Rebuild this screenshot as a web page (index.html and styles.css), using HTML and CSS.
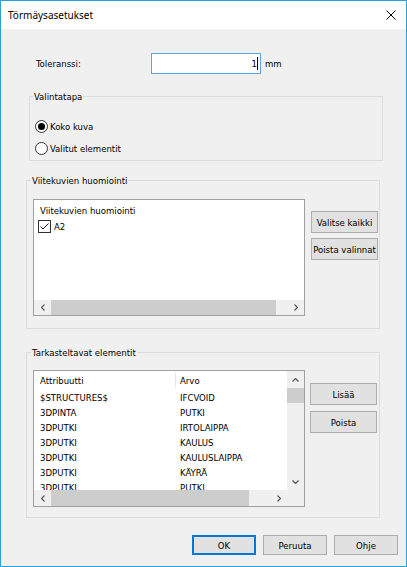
FILE: index.html
```html
<!DOCTYPE html>
<html lang="fi">
<head>
  <meta charset="UTF-8" />
  <title>Törmäysasetukset</title>
  <link rel="stylesheet" href="styles.css">
</head>
<body>
  <div class="window">
    <div class="titlebar">
      <span class="title">Törmäysasetukset</span>
      <svg class="close" width="10" height="10" viewBox="0 0 10 10">
        <path d="M0.5 0.5 L9.5 9.5 M9.5 0.5 L0.5 9.5" stroke="#000" stroke-width="1" fill="none"/>
      </svg>
    </div>

    <div class="tol-row">
      <span class="tol-label">Toleranssi:</span>
      <div class="textbox"><span>1</span><i class="caret"></i></div>
      <span class="unit">mm</span>
    </div>

    <fieldset class="group group-select">
      <legend>Valintatapa</legend>
      <div class="radio-row"><span class="radio checked"></span>Koko kuva</div>
      <div class="radio-row"><span class="radio"></span>Valitut elementit</div>
    </fieldset>

    <fieldset class="group group-ref">
      <legend>Viitekuvien huomiointi</legend>
      <div class="group-inner">
        <div class="listbox">
          <div class="list-content">
            <div class="list-head">Viitekuvien huomiointi</div>
            <div class="check-row">
              <span class="checkbox">
                <svg width="11" height="11" viewBox="0 0 11 11"><polyline points="1.5,5.5 4,8 9.5,2.5" fill="none" stroke="#222" stroke-width="1"/></svg>
              </span>
              A2
            </div>
          </div>
          <div class="hscroll">
            <span class="arrow"><svg width="4" height="7" viewBox="0 0 4 7"><polyline points="3.5,0.5 0.5,3.5 3.5,6.5" fill="none" stroke="#555" stroke-width="1.2"/></svg></span>
            <span class="thumb thumb-ref"></span>
            <span class="track"></span>
            <span class="arrow"><svg width="4" height="7" viewBox="0 0 4 7"><polyline points="0.5,0.5 3.5,3.5 0.5,6.5" fill="none" stroke="#555" stroke-width="1.2"/></svg></span>
          </div>
        </div>
        <div class="side-buttons">
          <button class="btn side-btn">Valitse kaikki</button>
          <button class="btn side-btn">Poista valinnat</button>
        </div>
      </div>
    </fieldset>

    <fieldset class="group group-attr">
      <legend>Tarkasteltavat elementit</legend>
      <div class="group-inner attr-inner">
        <div class="listview">
          <div class="lv-main">
            <div class="lv-header">
              <span class="col1 head-col">Attribuutti</span>
              <span class="col2">Arvo</span>
            </div>
            <div class="lv-row"><span class="col1">$STRUCTURES$</span><span class="col2">IFCVOID</span></div>
            <div class="lv-row"><span class="col1">3DPINTA</span><span class="col2">PUTKI</span></div>
            <div class="lv-row"><span class="col1">3DPUTKI</span><span class="col2">IRTOLAIPPA</span></div>
            <div class="lv-row"><span class="col1">3DPUTKI</span><span class="col2">KAULUS</span></div>
            <div class="lv-row"><span class="col1">3DPUTKI</span><span class="col2">KAULUSLAIPPA</span></div>
            <div class="lv-row"><span class="col1">3DPUTKI</span><span class="col2">KÄYRÄ</span></div>
            <div class="lv-row"><span class="col1">3DPUTKI</span><span class="col2">PUTKI</span></div>
          </div>
          <div class="vscroll">
            <span class="arrow"><svg width="7" height="4" viewBox="0 0 7 4"><polyline points="0.5,3.5 3.5,0.5 6.5,3.5" fill="none" stroke="#555" stroke-width="1.2"/></svg></span>
            <span class="thumb thumb-v"></span>
            <span class="track"></span>
            <span class="arrow"><svg width="7" height="4" viewBox="0 0 7 4"><polyline points="0.5,0.5 3.5,3.5 6.5,0.5" fill="none" stroke="#555" stroke-width="1.2"/></svg></span>
          </div>
          <div class="hscroll">
            <span class="arrow"><svg width="4" height="7" viewBox="0 0 4 7"><polyline points="3.5,0.5 0.5,3.5 3.5,6.5" fill="none" stroke="#555" stroke-width="1.2"/></svg></span>
            <span class="thumb thumb-attr"></span>
            <span class="track"></span>
            <span class="arrow"><svg width="4" height="7" viewBox="0 0 4 7"><polyline points="0.5,0.5 3.5,3.5 0.5,6.5" fill="none" stroke="#555" stroke-width="1.2"/></svg></span>
          </div>
          <div class="corner"></div>
        </div>
        <div class="side-buttons attr-buttons">
          <button class="btn side-btn">Lisää</button>
          <button class="btn side-btn">Poista</button>
        </div>
      </div>
    </fieldset>

    <div class="dialog-buttons">
      <button class="btn dlg-btn btn-default">OK</button>
      <button class="btn dlg-btn">Peruuta</button>
      <button class="btn dlg-btn">Ohje</button>
    </div>
  </div>
</body>
</html>
```

FILE: styles.css
```css
body {
  margin: 0;
  font-family: "DejaVu Sans Condensed", "DejaVu Sans", sans-serif;
  font-size: 9.5px;
  color: #000;
}

.window {
  width: 407px;
  height: 567px;
  box-sizing: border-box;
  border: 1px solid #2a9fd8;
  background: #f0f0f0;
  display: flex;
  flex-direction: column;
  overflow: hidden;
}

.titlebar {
  height: 28px;
  flex-shrink: 0;
  background: #fff;
  display: flex;
  align-items: center;
  justify-content: space-between;
  padding: 0 10px 0 7px;
}

.title {
  font-family: "Noto Sans", "Open Sans", sans-serif;
  font-size: 10px;
}

/* tolerance row */
.tol-row {
  display: flex;
  align-items: center;
  height: 21px;
  margin: 24px 0 0 35px;
}

.tol-label {
  width: 115px;
}

.textbox {
  width: 110px;
  height: 21px;
  box-sizing: border-box;
  border: 1px solid #5fa3e3;
  background: #fff;
  display: flex;
  align-items: center;
  justify-content: flex-end;
  padding-right: 2px;
}

.caret {
  width: 1px;
  height: 13px;
  background: #000;
}

.unit {
  margin-left: 4px;
}

/* group boxes */
.group {
  width: 354px;
  box-sizing: border-box;
  border: 1px solid #dcdcdc;
  margin: 0;
  padding: 0;
  min-width: 0;
}

.group legend {
  line-height: 13px;
  padding: 0 1px;
  margin-left: -2px;
}

.group-select {
  margin: 16px 0 0 28px;
  padding: 17px 0 5px 5px;
}

.group-ref {
  margin: 13px 0 0 25px;
  padding: 12px 1px 12px 6px;
}

.group-attr {
  margin: 17px 0 0 25px;
  padding: 11px 2px 10px 6px;
}

.radio-row {
  display: flex;
  align-items: center;
  gap: 2px;
  height: 13px;
}

.radio-row + .radio-row {
  margin-top: 9px;
}

.radio {
  width: 13px;
  height: 13px;
  box-sizing: border-box;
  border: 1px solid #333;
  border-radius: 50%;
  background: #fff;
  display: flex;
  align-items: center;
  justify-content: center;
}

.radio.checked::after {
  content: "";
  width: 7px;
  height: 7px;
  border-radius: 50%;
  background: #000;
}

.group-inner {
  display: flex;
  align-items: flex-start;
  gap: 6px;
}

.attr-inner {
  gap: 5px;
}

/* list box */
.listbox {
  width: 272px;
  height: 117px;
  box-sizing: border-box;
  border: 1px solid #a0a0a0;
  background: #fff;
  display: flex;
  flex-direction: column;
}

.list-content {
  flex: 1;
  padding-top: 3px;
}

.list-head {
  line-height: 15px;
  padding-left: 6px;
}

.check-row {
  display: flex;
  align-items: center;
  gap: 3px;
  height: 17px;
  padding-left: 4px;
}

.checkbox {
  width: 13px;
  height: 13px;
  box-sizing: border-box;
  border: 1px solid #333;
  background: #fff;
  display: flex;
}

/* scrollbars */
.hscroll {
  height: 15px;
  display: flex;
  background: #f0f0f0;
}

.listview .hscroll {
  height: 16px;
}

.vscroll {
  display: flex;
  flex-direction: column;
  background: #f0f0f0;
}

.arrow {
  width: 17px;
  height: 100%;
  flex-shrink: 0;
  display: flex;
  align-items: center;
  justify-content: center;
}

.vscroll .arrow {
  width: 100%;
  height: 17px;
}

.thumb {
  background: #cdcdcd;
  flex-shrink: 0;
}

.track {
  flex: 1;
}

.thumb-ref {
  width: 225px;
}

.thumb-attr {
  width: 198px;
}

.thumb-v {
  height: 15px;
}

.corner {
  background: #f0f0f0;
}

/* list view */
.listview {
  width: 272px;
  height: 137px;
  box-sizing: border-box;
  border: 1px solid #a0a0a0;
  background: #fff;
  display: grid;
  grid-template-columns: 253px 17px;
  grid-template-rows: 119px 16px;
}

.lv-main {
  overflow: hidden;
}

.lv-header {
  display: flex;
  align-items: center;
  height: 19px;
}

.lv-row {
  display: flex;
  align-items: center;
  height: 15px;
}

.col1 {
  width: 142px;
  box-sizing: border-box;
  padding-left: 6px;
  flex-shrink: 0;
}

.head-col {
  height: 15px;
  line-height: 15px;
  border-right: 1px solid #e5e5e5;
}

.col2 {
  padding-left: 4px;
  white-space: nowrap;
}

/* buttons */
.btn {
  font: inherit;
  color: #000;
  background: #e1e1e1;
  border: 1px solid #adadad;
  padding: 0;
  box-sizing: border-box;
}

.side-buttons {
  display: flex;
  flex-direction: column;
  gap: 5px;
  margin-top: 12px;
}

.attr-buttons {
  gap: 6px;
  margin-top: 13px;
}

.side-btn {
  width: 67px;
  height: 22px;
}

.dialog-buttons {
  display: flex;
  justify-content: flex-end;
  gap: 7px;
  margin: 17px 8px 0 0;
}

.dlg-btn {
  width: 64px;
  height: 20px;
}

.btn-default {
  border-color: #0078d7;
  box-shadow: inset 0 0 0 1px #0078d7;
}
```
